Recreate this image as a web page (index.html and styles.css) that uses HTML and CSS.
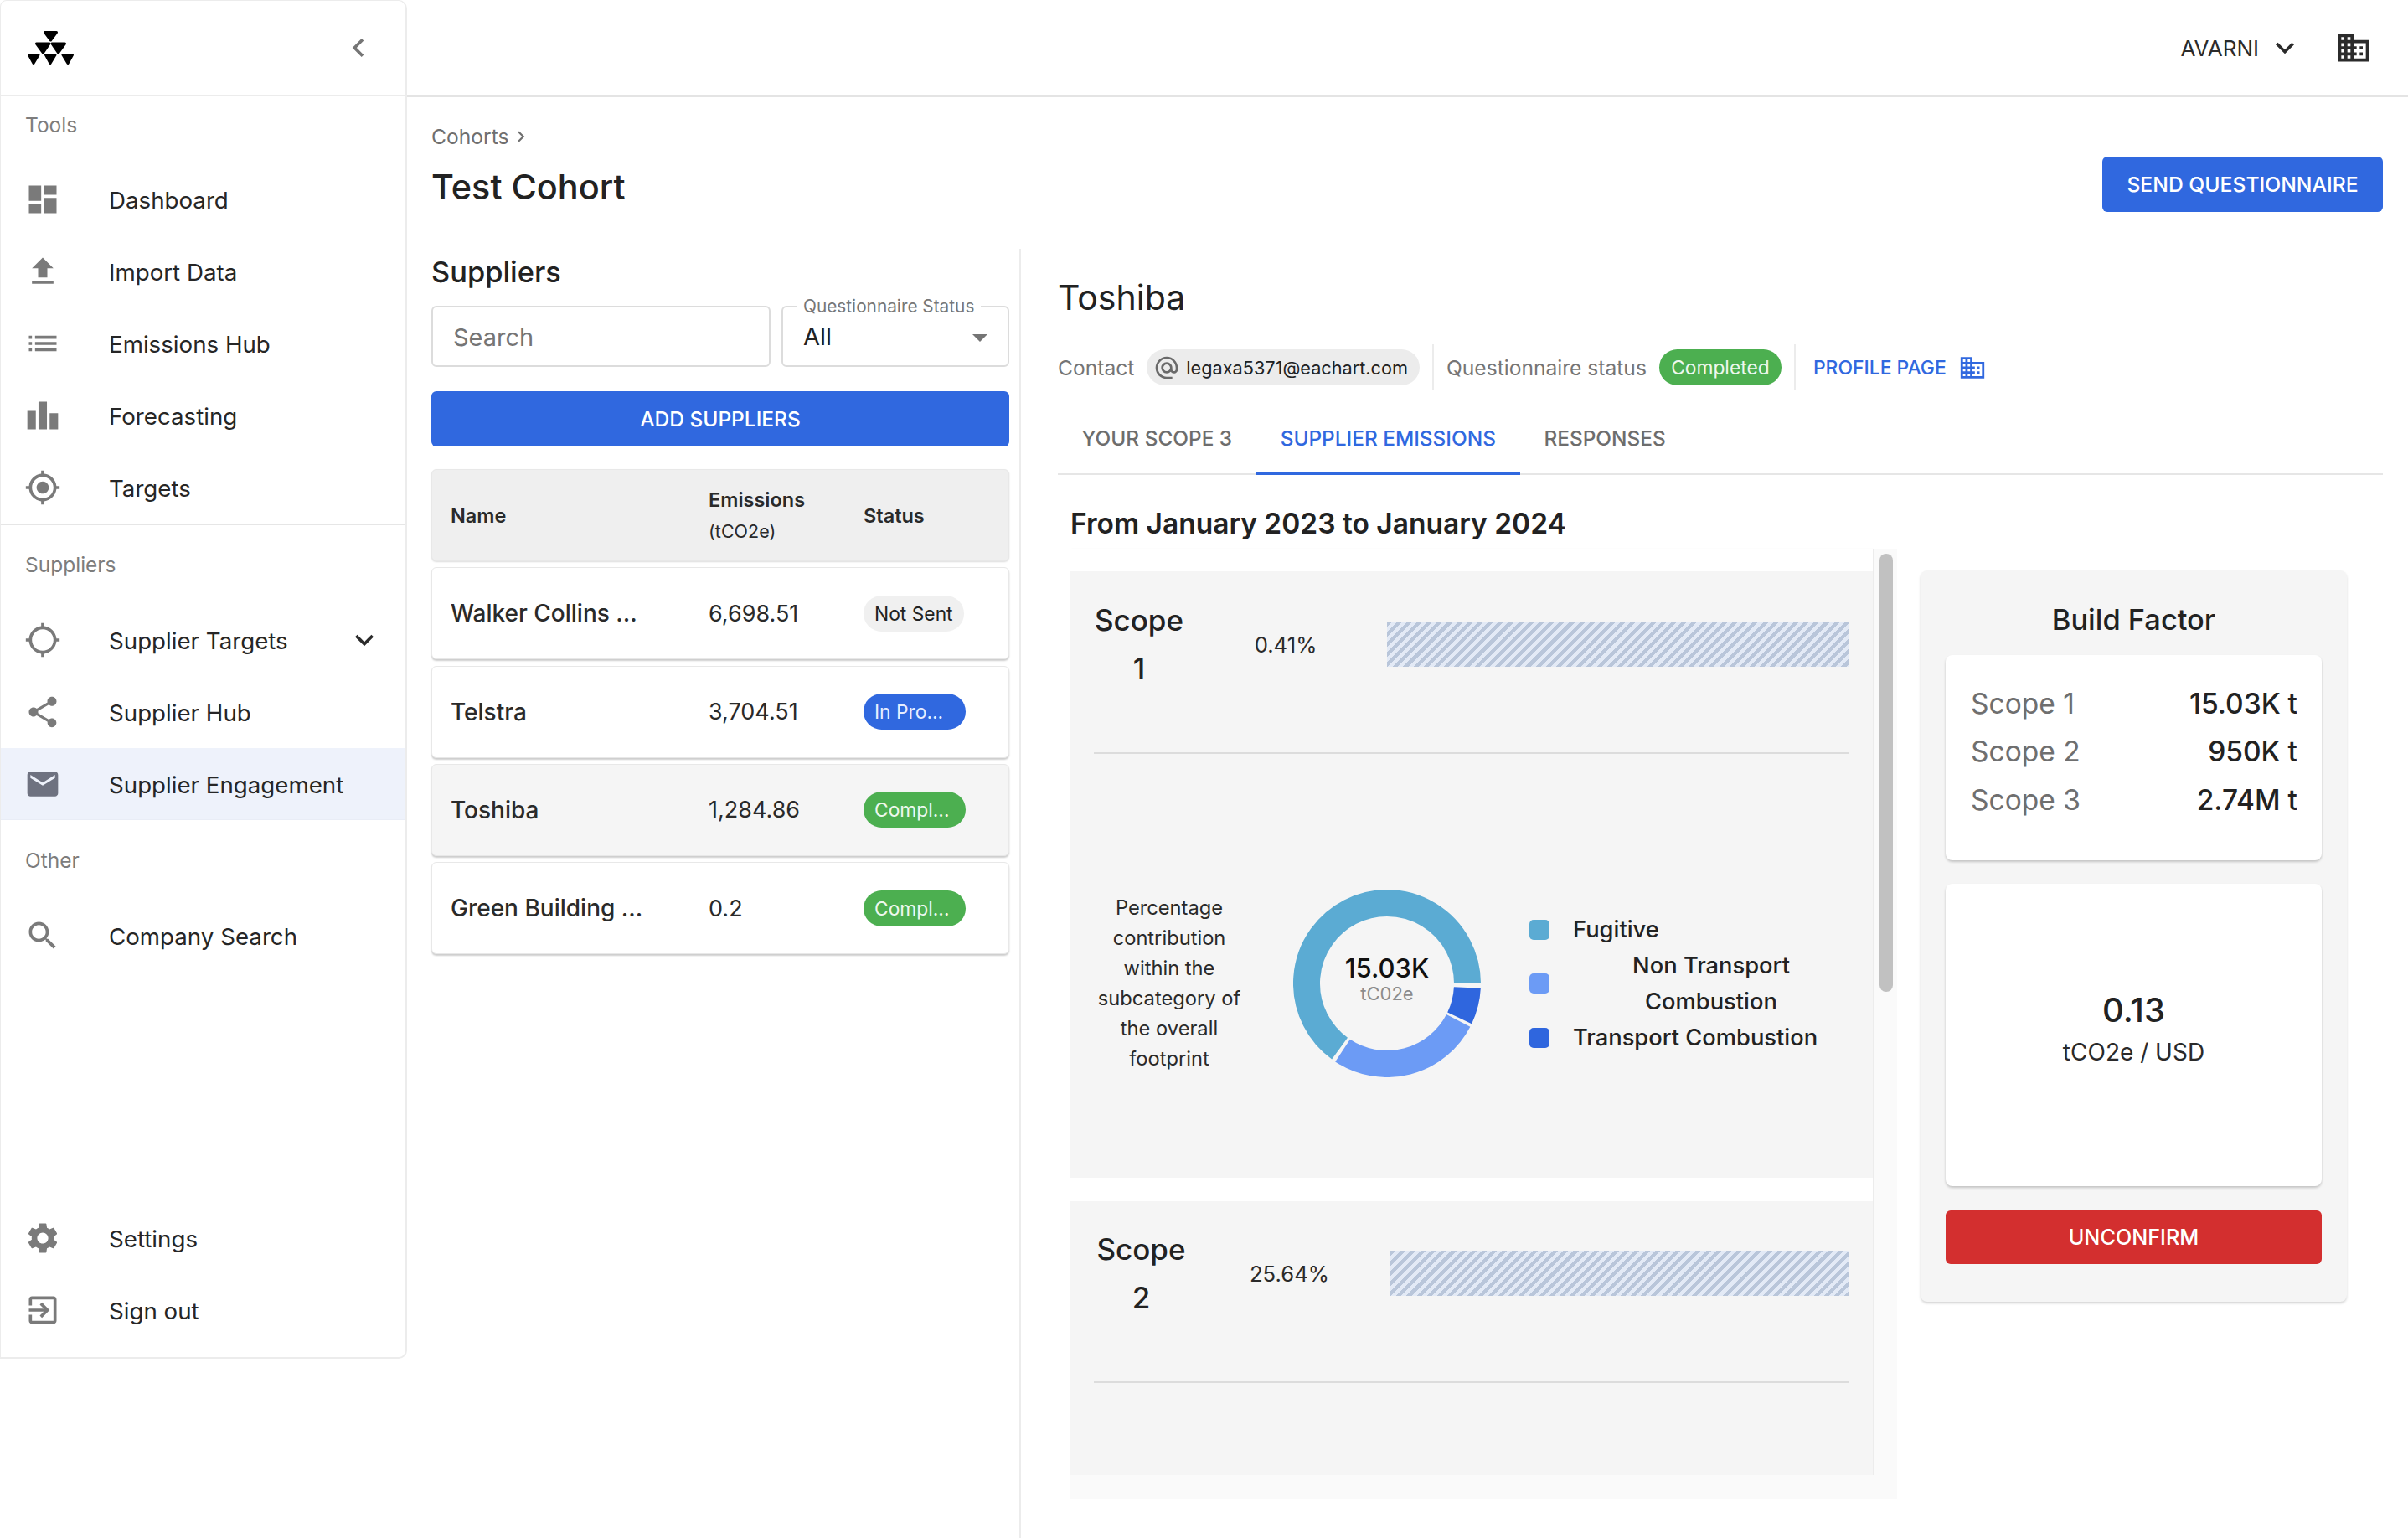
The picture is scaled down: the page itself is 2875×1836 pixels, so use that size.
FILE: index.html
```html
<!DOCTYPE html>
<html lang="en">
<head>
<meta charset="utf-8">
<title>Test Cohort</title>
<link rel="stylesheet" href="styles.css">
</head>
<body>
<div class="app">
  <aside class="sidebar">
    <div class="brand">
      <svg class="logo" viewBox="0 0 55 40"><g fill="#000" stroke="#000" stroke-width="3" stroke-linejoin="round"><polygon points="20.5,1.5 34.5,1.5 27.5,11"/><polygon points="10.5,15 26,15 18.5,26"/><polygon points="29,15 44.5,15 36.5,26"/><polygon points="1.5,28.5 13,28.5 7,38.5"/><polygon points="21.5,28.5 33,28.5 27,38.5"/><polygon points="42,28.5 53.5,28.5 48,38.5"/></g></svg>
      <svg class="ic ic-gray" viewBox="0 0 24 24"><path d="M15.41 7.41 14 6l-6 6 6 6 1.41-1.41L10.83 12z"/></svg>
    </div>
    <section class="group group-tools">
      <div class="group-label">Tools</div>
      <a class="nav-row"><svg class="ic" viewBox="0 0 24 24"><path d="M3 13h8V3H3v10zm0 8h8v-6H3v6zm10 0h8V11h-8v10zm0-18v6h8V3h-8z"/></svg><span>Dashboard</span></a>
      <a class="nav-row"><svg class="ic" viewBox="0 0 24 24"><path d="M9 16h6v-6h4l-7-7-7 7h4zm-4 2h14v2H5z"/></svg><span>Import Data</span></a>
      <a class="nav-row"><svg class="ic" viewBox="0 0 24 24"><path d="M3 13h2v-2H3v2zm0 4h2v-2H3v2zm0-8h2V7H3v2zm4 4h14v-2H7v2zm0 4h14v-2H7v2zM7 7v2h14V7H7z"/></svg><span>Emissions Hub</span></a>
      <a class="nav-row"><svg class="ic" viewBox="0 0 24 24"><path d="M7.5 21H2V9h5.5v12zm7.25-18h-5.5v18h5.5V3zM22 10.5h-5.5V21H22V10.5z"/></svg><span>Forecasting</span></a>
      <a class="nav-row"><svg class="ic" viewBox="0 0 24 24"><path d="M12 8c-2.21 0-4 1.79-4 4s1.79 4 4 4 4-1.79 4-4-1.79-4-4-4zm8.94 3c-.46-4.17-3.77-7.48-7.94-7.94V1h-2v2.06C6.83 3.52 3.52 6.83 3.06 11H1v2h2.06c.46 4.17 3.77 7.48 7.94 7.94V23h2v-2.06c4.17-.46 7.48-3.77 7.94-7.94H23v-2h-2.06zM12 19c-3.87 0-7-3.13-7-7s3.13-7 7-7 7 3.13 7 7-3.13 7-7 7z"/></svg><span>Targets</span></a>
    </section>
    <section class="group group-suppliers">
      <div class="group-label">Suppliers</div>
      <a class="nav-row"><svg class="ic" viewBox="0 0 24 24"><path d="M20.94 11c-.46-4.17-3.77-7.48-7.94-7.94V1h-2v2.06C6.83 3.52 3.52 6.83 3.06 11H1v2h2.06c.46 4.17 3.77 7.48 7.94 7.94V23h2v-2.06c4.17-.46 7.48-3.77 7.94-7.94H23v-2h-2.06zM12 19c-3.87 0-7-3.13-7-7s3.13-7 7-7 7 3.13 7 7-3.13 7-7 7z"/></svg><span>Supplier Targets</span><svg class="ic ic-dark nav-caret" viewBox="0 0 24 24"><path d="M16.59 8.59 12 13.17 7.41 8.59 6 10l6 6 6-6z"/></svg></a>
      <a class="nav-row"><svg class="ic" viewBox="0 0 24 24"><path d="M18 16.08c-.76 0-1.44.3-1.96.77L8.91 12.7c.05-.23.09-.46.09-.7s-.04-.47-.09-.7l7.05-4.11c.54.5 1.25.81 2.04.81 1.66 0 3-1.34 3-3s-1.34-3-3-3-3 1.34-3 3c0 .24.04.47.09.7L8.04 9.81C7.5 9.31 6.79 9 6 9c-1.66 0-3 1.34-3 3s1.34 3 3 3c.79 0 1.5-.31 2.04-.81l7.12 4.16c-.05.21-.08.43-.08.65 0 1.61 1.31 2.92 2.92 2.92 1.61 0 2.92-1.31 2.92-2.92s-1.31-2.92-2.92-2.92z"/></svg><span>Supplier Hub</span></a>
      <a class="nav-row nav-active"><svg class="ic ic-slate" viewBox="0 0 24 24"><path d="M20 4H4c-1.1 0-2 .9-2 2v12c0 1.1.9 2 2 2h16c1.1 0 2-.9 2-2V6c0-1.1-.9-2-2-2zm0 4l-8 5-8-5V6l8 5 8-5v2z"/></svg><span>Supplier Engagement</span></a>
    </section>
    <section class="group group-other">
      <div class="group-label">Other</div>
      <a class="nav-row"><svg class="ic" viewBox="0 0 24 24"><path d="M15.5 14h-.79l-.28-.27C15.41 12.59 16 11.11 16 9.5 16 5.91 13.09 3 9.5 3S3 5.91 3 9.5 5.91 16 9.5 16c1.61 0 3.09-.59 4.23-1.57l.27.28v.79l5 4.99L20.49 19l-4.99-5zm-6 0C7.01 14 5 11.99 5 9.5S7.01 5 9.5 5 14 7.01 14 9.5 11.99 14 9.5 14z"/></svg><span>Company Search</span></a>
    </section>
    <section class="group group-bottom">
      <a class="nav-row"><svg class="ic" viewBox="0 0 24 24"><path d="M19.14 12.94c.04-.3.06-.61.06-.94 0-.32-.02-.64-.07-.94l2.03-1.58c.18-.14.23-.41.12-.61l-1.92-3.32c-.12-.22-.37-.29-.59-.22l-2.39.96c-.5-.38-1.03-.7-1.62-.94l-.36-2.54c-.04-.24-.24-.41-.48-.41h-3.84c-.24 0-.43.17-.47.41l-.36 2.54c-.59.24-1.13.57-1.62.94l-2.39-.96c-.22-.08-.47 0-.59.22L2.74 8.87c-.12.21-.08.47.12.61l2.03 1.58c-.05.3-.09.63-.09.94s.02.64.07.94l-2.03 1.58c-.18.14-.23.41-.12.61l1.92 3.32c.12.22.37.29.59.22l2.39-.96c.5.38 1.03.7 1.62.94l.36 2.54c.05.24.24.41.48.41h3.84c.24 0 .44-.17.47-.41l.36-2.54c.59-.24 1.13-.56 1.62-.94l2.39.96c.22.08.47 0 .59-.22l1.92-3.32c.12-.22.07-.47-.12-.61l-2.01-1.58zM12 15.6c-1.98 0-3.6-1.62-3.6-3.6s1.62-3.6 3.6-3.6 3.6 1.62 3.6 3.6-1.62 3.6-3.6 3.6z"/></svg><span>Settings</span></a>
      <a class="nav-row"><svg class="ic" viewBox="0 0 24 24"><path d="M10.09 15.59 11.5 17l5-5-5-5-1.41 1.41L12.67 11H3v2h9.67l-2.58 2.59zM19 3H5c-1.11 0-2 .9-2 2v4h2V5h14v14H5v-4H3v4c0 1.1.89 2 2 2h14c1.1 0 2-.9 2-2V5c0-1.1-.9-2-2-2z"/></svg><span>Sign out</span></a>
    </section>
  </aside>

  <div class="main">
    <header class="topbar">
      <span class="org">AVARNI</span>
      <svg class="ic ic-dark org-caret" viewBox="0 0 24 24"><path d="M16.59 8.59 12 13.17 7.41 8.59 6 10l6 6 6-6z"/></svg>
      <svg class="ic ic-dark org-icon" viewBox="0 0 24 24"><path d="M12 7V3H2v18h20V7H12zM6 19H4v-2h2v2zm0-4H4v-2h2v2zm0-4H4V9h2v2zm0-4H4V5h2v2zm4 12H8v-2h2v2zm0-4H8v-2h2v2zm0-4H8V9h2v2zm0-4H8V5h2v2zm10 12h-8v-2h2v-2h-2v-2h2v-2h-2V9h8v10zm-2-8h-2v2h2v-2zm0 4h-2v2h2v-2z"/></svg>
    </header>
    <div class="content">
      <div class="page-head">
        <div>
          <div class="crumbs"><span>Cohorts</span><svg class="crumb-sep" viewBox="0 0 24 24"><path d="M8.59 16.59 10 18l6-6-6-6-1.41 1.41L13.17 12z"/></svg></div>
          <h1 class="page-title">Test Cohort</h1>
        </div>
        <button class="btn btn-primary btn-send">SEND QUESTIONNAIRE</button>
      </div>
      <div class="columns">
        <div class="list-col">
          <h2 class="list-title">Suppliers</h2>
          <div class="filters">
            <div class="field field-search">Search</div>
            <div class="field field-select">
              <span class="field-label">Questionnaire Status</span>
              <span>All</span>
              <span class="select-arrow"></span>
            </div>
          </div>
          <button class="btn btn-primary btn-add">ADD SUPPLIERS</button>
          <div class="table">
            <div class="trow thead">
              <div>Name</div>
              <div class="th-stack"><span>Emissions</span><small>(tCO2e)</small></div>
              <div>Status</div>
            </div>
            <div class="trow">
              <div class="name">Walker Collins ...</div><div>6,698.51</div>
              <div><span class="chip chip-grey">Not Sent</span></div>
            </div>
            <div class="trow">
              <div class="name">Telstra</div><div>3,704.51</div>
              <div><span class="chip chip-blue">In Pro...</span></div>
            </div>
            <div class="trow trow-selected">
              <div class="name">Toshiba</div><div>1,284.86</div>
              <div><span class="chip chip-green">Compl...</span></div>
            </div>
            <div class="trow">
              <div class="name">Green Building ...</div><div>0.2</div>
              <div><span class="chip chip-green">Compl...</span></div>
            </div>
          </div>
        </div>

        <div class="detail">
          <h2 class="detail-title">Toshiba</h2>
          <div class="meta">
            <div class="meta-part">
              <span class="meta-label">Contact</span>
              <span class="chip chip-contact"><svg class="at" viewBox="0 0 24 24"><path d="M12 2C6.48 2 2 6.48 2 12s4.48 10 10 10h5v-2h-5c-4.34 0-8-3.66-8-8s3.66-8 8-8 8 3.66 8 8v1.43c0 .79-.71 1.57-1.5 1.57s-1.5-.78-1.5-1.57V12c0-2.76-2.24-5-5-5s-5 2.24-5 5 2.24 5 5 5c1.38 0 2.64-.56 3.54-1.47.65.89 1.77 1.47 2.96 1.47 1.97 0 3.5-1.6 3.5-3.57V12c0-5.52-4.48-10-10-10zm0 13c-1.66 0-3-1.34-3-3s1.34-3 3-3 3 1.34 3 3-1.34 3-3 3z"/></svg>legaxa5371@eachart.com</span>
            </div>
            <div class="meta-part">
              <span class="meta-label">Questionnaire status</span>
              <span class="chip chip-green chip-completed">Completed</span>
            </div>
            <a class="profile-link">PROFILE PAGE<svg class="profile-icon" viewBox="0 0 24 24"><path d="M12 7V3H2v18h20V7H12zM6 19H4v-2h2v2zm0-4H4v-2h2v2zm0-4H4V9h2v2zm0-4H4V5h2v2zm4 12H8v-2h2v2zm0-4H8v-2h2v2zm0-4H8V9h2v2zm0-4H8V5h2v2zm10 12h-8v-2h2v-2h-2v-2h2v-2h-2V9h8v10zm-2-8h-2v2h2v-2zm0 4h-2v2h2v-2z"/></svg></a>
          </div>
          <nav class="tabs">
            <a class="tab">YOUR SCOPE 3</a>
            <a class="tab tab-active">SUPPLIER EMISSIONS</a>
            <a class="tab">RESPONSES</a>
          </nav>
          <h3 class="range">From January 2023 to January 2024</h3>
          <div class="panels">
            <div class="scroller">
              <div class="viewport">
                <article class="scope scope-one">
                  <div class="scope-head scope-head-one">
                    <div class="scope-name">Scope<br>1</div>
                    <div class="scope-pct">0.41%</div>
                    <div class="hatch"></div>
                  </div>
                  <div class="breakdown">
                    <p class="breakdown-note">Percentage contribution within the subcategory of the overall footprint</p>
                    <div class="donut">
                      <svg class="donut-svg" viewBox="0 0 224 224">
                        <g fill="none" stroke-width="32">
                          <path stroke="#5BABD3" d="M55.57 189.67A96 96 0 1 1 207.99 111.33"/>
                          <path stroke="#6C9BF5" d="M197.15 156.33A96 96 0 0 1 59.02 192.05"/>
                          <path stroke="#2F66DE" d="M207.87 117.02A96 96 0 0 1 198.65 153.33"/>
                        </g>
                      </svg>
                      <div class="donut-center"><strong>15.03K</strong><span>tC02e</span></div>
                    </div>
                    <ul class="legend">
                      <li><i class="swatch swatch-a"></i><span>Fugitive</span></li>
                      <li><i class="swatch swatch-b"></i><span class="legend-center">Non Transport Combustion</span></li>
                      <li><i class="swatch swatch-c"></i><span>Transport Combustion</span></li>
                    </ul>
                  </div>
                </article>
                <article class="scope scope-two">
                  <div class="scope-head scope-head-two">
                    <div class="scope-name">Scope<br>2</div>
                    <div class="scope-pct">25.64%</div>
                    <div class="hatch"></div>
                  </div>
                </article>
              </div>
              <div class="vtrack"><div class="vthumb"></div></div>
              <div class="htrack"></div>
            </div>
            <aside class="factor">
              <h4 class="factor-title">Build Factor</h4>
              <div class="factor-card factor-list">
                <div class="factor-row"><span>Scope 1</span><b>15.03K t</b></div>
                <div class="factor-row"><span>Scope 2</span><b>950K t</b></div>
                <div class="factor-row"><span>Scope 3</span><b>2.74M t</b></div>
              </div>
              <div class="factor-card factor-ratio">
                <div class="ratio-value">0.13</div>
                <div class="ratio-unit">tCO2e / USD</div>
              </div>
              <button class="btn btn-danger">UNCONFIRM</button>
            </aside>
          </div>
        </div>
      </div>
    </div>
  </div>
</div>
</body>
</html>
```
FILE: styles.css
```css
* { box-sizing: border-box; }
html, body { margin: 0; padding: 0; background: #fff; }
body { font-family: "Inter", "Liberation Sans", sans-serif; color: #222; width: 2875px; height: 1836px; overflow: hidden; }
h1, h2, h3, h4, p, ul { margin: 0; padding: 0; font-weight: 500; }
button { font-family: inherit; border: 0; cursor: pointer; }

.app { display: flex; width: 2875px; height: 1836px; }

.ic { width: 44px; height: 44px; flex: none; fill: #7a7a7a; }
.ic-gray { fill: #757575; }
.ic-dark { fill: #2b2b2b; }
.ic-slate { fill: #6e7280; }

.sidebar { width: 486px; height: 1622px; flex: none; display: flex; flex-direction: column; border: 2px solid #ececec; border-width: 1px 2px 2px 1px; border-radius: 8px 10px 10px 0; }
.brand { height: 114px; flex: none; display: flex; align-items: center; justify-content: space-between; padding: 0 34px 0 32px; border-bottom: 2px solid #ececec; }
.logo { width: 55px; height: 40px; margin-top: -1px; }
.group-label { height: 36px; line-height: 36px; padding-left: 29px; font-size: 24.5px; color: #7d7d7d; }
.group-tools { padding-top: 16px; border-bottom: 2px solid #e6e6e6; }
.group-tools .group-label { margin-bottom: 28px; }
.group-suppliers { padding-top: 29px; }
.group-suppliers .group-label { margin-bottom: 29px; }
.group-other { padding-top: 30px; }
.group-other .group-label { margin-bottom: 29px; }
.group-bottom { margin-top: auto; padding-bottom: 13px; }
.nav-row { height: 86px; display: flex; align-items: center; gap: 57px; padding-left: 28px; font-size: 27.7px; color: #262626; }
.nav-row span { padding-top: 2px; }
.nav-active { background: #eef2fb; border-bottom: 1px solid #e9edf6; }
.nav-caret { margin-left: auto; margin-right: 27px; }

.main { flex: 1; min-width: 0; display: flex; flex-direction: column; }
.topbar { height: 116px; flex: none; display: flex; align-items: center; justify-content: flex-end; padding: 0 43px 0 0; border-bottom: 2px solid #e4e4e4; }
.org { font-size: 26px; color: #2b2b2b; }
.org-caret { margin-left: 9px; }
.org-icon { margin-left: 38px; }

.content { flex: 1; min-height: 0; padding: 0 30px 0 29px; }
.page-head { display: flex; justify-content: space-between; padding-top: 30px; }
.crumbs { height: 33px; padding-top: 1px; display: flex; align-items: center; gap: 2px; font-size: 24.6px; color: #6f6f6f; }
.crumb-sep { width: 26px; height: 26px; fill: #6f6f6f; }
.page-title { margin-top: 16px; font-size: 41.4px; line-height: 56px; color: #222; }
.btn { display: block; font-weight: 500; color: #fff; border-radius: 6px; }
.btn-primary { background: #3068df; }
.btn-danger { width: 100%; height: 64px; margin-top: 29px; background: #d32f2f; font-size: 25.2px; }
.btn-send { width: 335px; height: 66px; margin-top: 41px; font-size: 24.7px; }

.columns { display: flex; margin-top: 44px; }
.list-col { width: 704px; flex: none; padding: 8px 12px 0 0; height: 1539px; border-right: 2px solid #ececec; }
.list-title { font-size: 34.4px; line-height: 40px; color: #222; }
.filters { display: flex; gap: 13px; margin-top: 20px; }
.field { position: relative; height: 73px; display: flex; align-items: center; border: 2px solid #dcdcdc; border-radius: 6px; padding-left: 24px; font-size: 29px; }
.field-search { width: 405px; color: #757575; padding-top: 2px; }
.field-select { flex: 1; color: #222; }
.field-label { position: absolute; left: 16px; top: -15px; padding: 0 8px; background: #fff; font-size: 20.8px; line-height: 28px; color: #777; white-space: nowrap; }
.select-arrow { position: absolute; right: 24px; top: 32px; width: 0; height: 0; border: 9px solid transparent; border-top-color: #757575; border-bottom: 0; }
.btn-add { width: 100%; height: 66px; margin-top: 29px; font-size: 24.5px; }
.table { display: flex; flex-direction: column; gap: 7.3px; margin-top: 27px; }
.trow { display: grid; grid-template-columns: 308px 185px 1fr; align-items: center; height: 110px; padding-left: 22px; border-radius: 6px; background: #fff; border: 1px solid #e8e8e8; box-shadow: 0 2px 2px rgba(0,0,0,.2); font-size: 27px; color: #2a2a2a; }
.thead { background: #efefef; font-size: 23.5px; font-weight: 600; box-shadow: 0 1px 2px rgba(0,0,0,.14); }
.th-stack { display: flex; flex-direction: column; gap: 10px; margin-top: -2px; }
.th-stack small { font-size: 21.5px; font-weight: 400; }
.name { font-weight: 500; font-size: 28px; }
.trow-selected { background: #f5f5f5; }
.chip { display: inline-flex; align-items: center; height: 43px; border-radius: 22px; padding: 0 13px; font-size: 22.8px; white-space: nowrap; }
.chip-grey { width: 120px; background: #f0f0f0; color: #222; }
.chip-blue { width: 122px; background: #3068df; color: #e6edff; }
.chip-green { width: 122px; background: #4caf50; color: #eef8ee; }

.detail { flex: 1; min-width: 0; padding: 30px 0 0 44px; }
.detail-title { font-size: 41px; line-height: 56px; font-weight: 400; color: #222; }
.meta { display: flex; align-items: center; height: 55px; margin-top: 28px; }
.meta-part { display: flex; align-items: center; gap: 15px; height: 55px; padding-right: 15px; margin-right: 15px; border-right: 2px solid #ececec; }
.meta-label { font-size: 24.6px; color: #757575; }
.chip-contact { gap: 7px; padding: 0 14px 0 8px; font-size: 21.7px; background: #ececec; color: #222; }
.at { width: 32px; height: 32px; fill: #6a6a6a; }
.chip-completed { width: 146px; justify-content: center; padding: 0; }
.profile-link { display: flex; align-items: center; gap: 14px; margin-left: 6px; font-size: 22.9px; font-weight: 500; color: #3068df; }
.profile-icon { width: 34px; height: 34px; fill: #3068df; }
.tabs { display: flex; height: 88px; margin-top: 13px; border-bottom: 2px solid #e6e6e6; }
.tab { display: flex; align-items: center; height: 88px; padding: 0 29px 0 28.5px; font-size: 24.4px; font-weight: 500; color: #6d6d6d; white-space: nowrap; }
.tab-active { color: #3068df; box-shadow: inset 0 -4px 0 #3068df; }
.range { margin: 36px 0 0 15px; font-size: 33.5px; line-height: 44px; font-weight: 600; color: #222; }
.panels { display: flex; align-items: flex-start; margin: 8px 0 0 15px; }

.scroller { width: 987px; height: 1134px; flex: none; display: grid; grid-template-columns: 958px 29px; grid-template-rows: 1106px 28px; border-right: 2px solid #ececec; border-bottom: 2px solid #e6e6e6; background: #fff; }
.viewport { overflow: hidden; padding-top: 27px; box-shadow: 1px 1px 2px rgba(0,0,0,.12); }
.scope { background: #f5f5f5; padding: 0 29px 0 28px; }
.scope-one { height: 724px; }
.scope-two { margin-top: 28px; height: 327px; }
.scope-head { display: grid; align-items: center; border-bottom: 2px solid #dcdcdc; }
.scope-head-one { grid-template-columns: 108px 242px 1fr; padding: 29px 0 71px; }
.scope-head-two { grid-template-columns: 113px 241px 1fr; padding: 28px 0 71px; }
.scope-name { text-align: center; font-size: 35px; font-weight: 500; line-height: 58px; color: #222; }
.scope-pct { text-align: center; font-size: 25.7px; color: #2a2a2a; }
.hatch { height: 54px; background: repeating-linear-gradient(135deg, #b9c6da 0 4.3px, #e3eaf6 4.3px 8.6px); }
.breakdown { display: flex; align-items: center; gap: 58px; padding-top: 162px; }
.breakdown-note { width: 180px; flex: none; text-align: center; font-size: 23.7px; line-height: 36px; font-weight: 400; color: #2a2a2a; }
.donut { position: relative; width: 224px; height: 224px; flex: none; }
.donut-svg { display: block; width: 224px; height: 224px; }
.donut-center { position: absolute; left: 0; right: 0; top: 0; bottom: 0; display: flex; flex-direction: column; align-items: center; justify-content: center; padding-bottom: 16px; }
.donut-center strong { font-size: 31px; line-height: 40px; font-weight: 500; color: #111; }
.donut-center span { font-size: 22px; line-height: 21px; color: #8c8c8c; }
.legend { list-style: none; display: flex; flex-direction: column; }
.legend li { display: flex; align-items: center; gap: 28px; width: 382px; }
.legend span { width: 330px; font-size: 27.3px; line-height: 43px; color: #222; }
.legend .legend-center { text-align: center; padding: 0 40px; }
.swatch { width: 24px; height: 24px; flex: none; border-radius: 5px; }
.swatch-a { background: #5babd3; }
.swatch-b { background: #6c9bf5; }
.swatch-c { background: #2f66de; }

.vtrack { background: #fafafa; border-left: 2px solid #ececec; padding: 6px 4px 0 6px; }
.vthumb { width: 16px; height: 523px; border-radius: 8px; background: #c1c1c1; }
.htrack { grid-column: 1 / 3; background: #fafafa; }

.factor { width: 509px; flex: none; margin: 26px 0 0 28px; padding: 37px 30px 45px; background: #f5f5f5; border-radius: 8px; box-shadow: 0 2px 3px rgba(0,0,0,.16); }
.factor-title { text-align: center; font-size: 34.4px; line-height: 44px; color: #222; }
.factor-card { background: #fff; border-radius: 8px; box-shadow: 0 2px 3px rgba(0,0,0,.2); }
.factor-list { height: 245px; margin-top: 20px; padding: 29px 29px 0 30px; }
.factor-row { display: flex; justify-content: space-between; align-items: center; height: 57.5px; font-size: 33.5px; }
.factor-row span { color: #6f6f6f; }
.factor-row b { font-weight: 500; color: #222; }
.factor-ratio { height: 361px; margin-top: 28px; display: flex; flex-direction: column; align-items: center; justify-content: center; padding-bottom: 18px; }
.ratio-value { font-size: 40px; line-height: 56px; font-weight: 500; color: #222; }
.ratio-unit { font-size: 28px; line-height: 40px; margin-top: 2px; color: #2a2a2a; }
```
